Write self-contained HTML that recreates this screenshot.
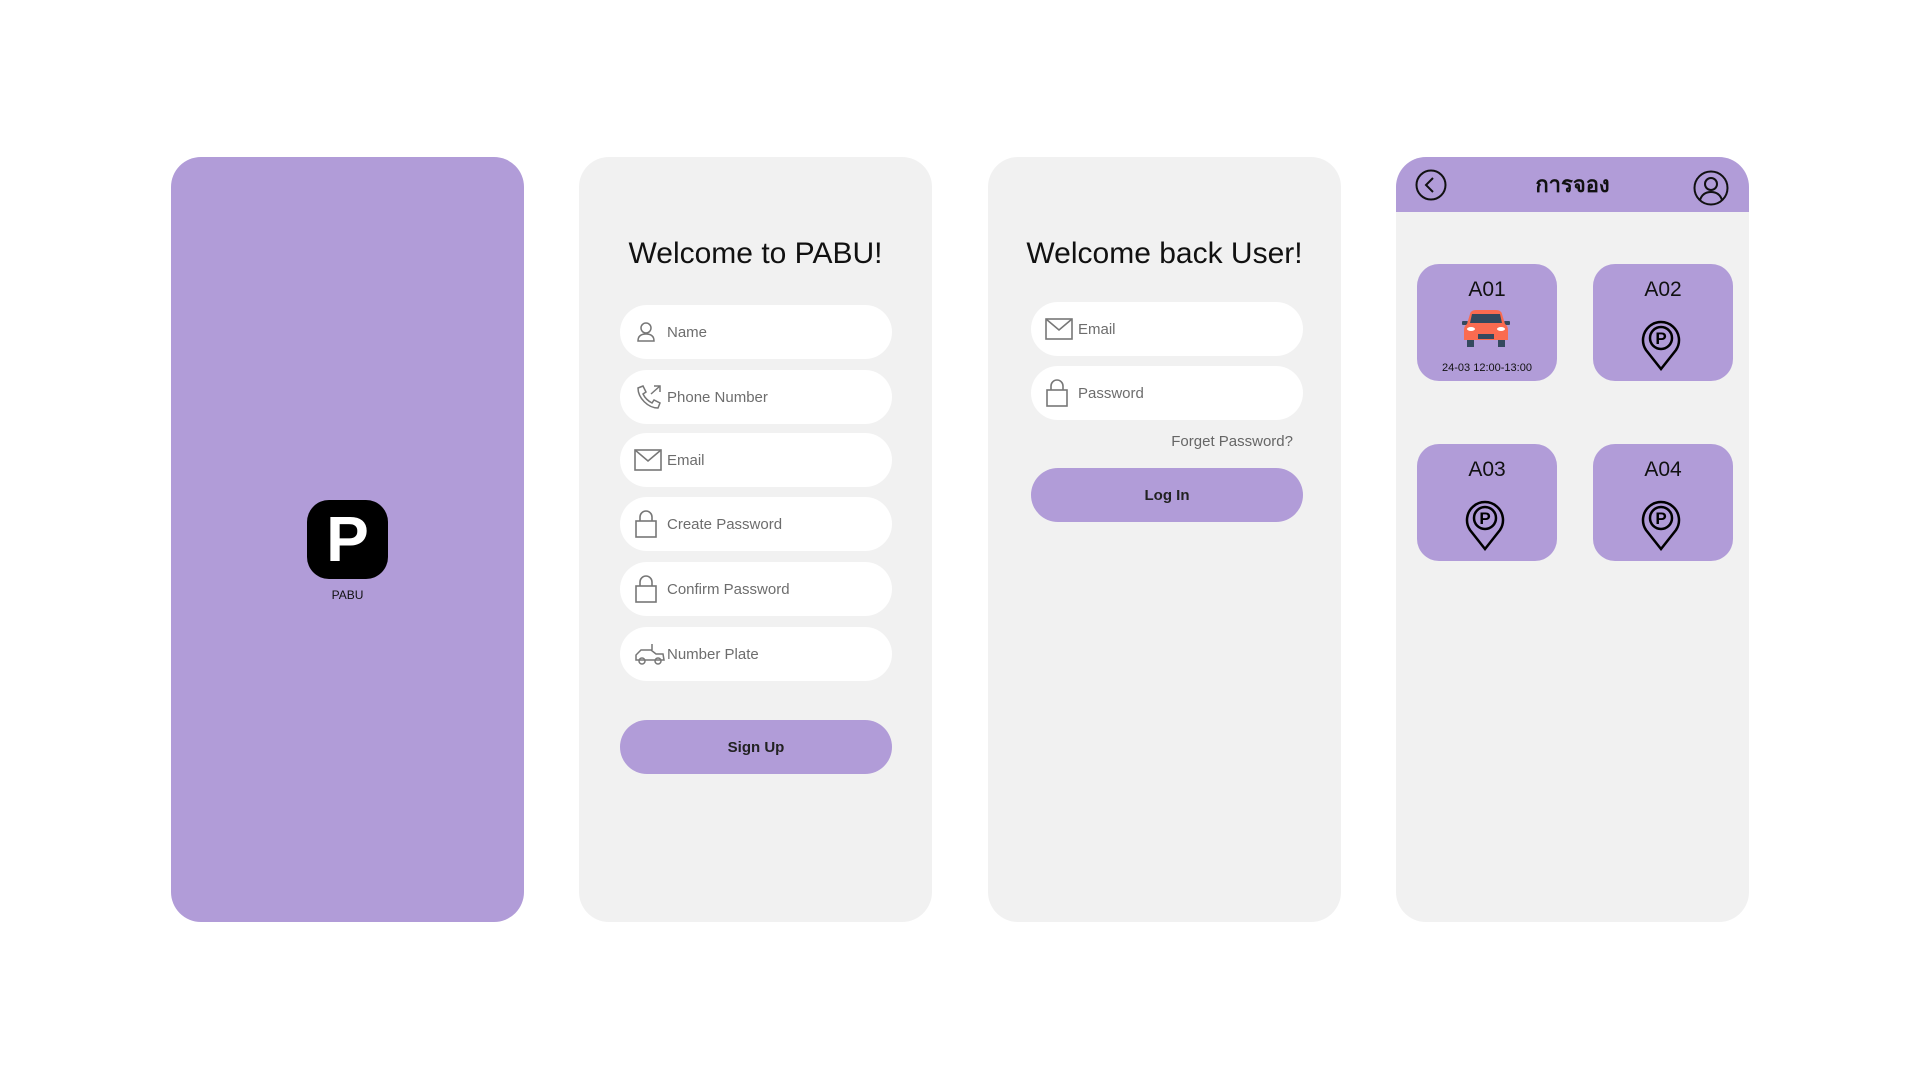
<!DOCTYPE html>
<html><head><meta charset="utf-8"><style>
*{margin:0;padding:0;box-sizing:border-box}
body{width:1920px;height:1080px;background:#fff;position:relative;font-family:"Liberation Sans","Noto Sans CJK SC",sans-serif;overflow:hidden}
.p{position:absolute;top:157px;height:765px;width:353px;border-radius:30px;background:#f1f1f1;overflow:hidden}
.pur{background:#b19cd8}
.in{position:absolute;height:54px;background:#fff;border-radius:27px;font-size:15px;color:#6d6d6d;display:flex;align-items:center}
.in svg{position:absolute;left:14px}
.in span{position:absolute;left:47px}
.btn{position:absolute;height:54px;background:#b19cd8;border-radius:27px;font-size:15px;font-weight:bold;color:#222;display:flex;align-items:center;justify-content:center}
h1{position:absolute;width:100%;text-align:center;font-size:30px;font-weight:normal;color:#111}
.card{position:absolute;width:140px;height:117px;background:#b19cd8;border-radius:22px}
.card b{position:absolute;top:14px;width:100%;text-align:center;font-size:21px;font-weight:normal;color:#111}
.pin{position:absolute;left:47px;top:55px}
</style></head><body>
<div class="p pur" style="left:171px">
 <div style="position:absolute;left:136px;top:343px;width:81px;height:79px;background:#000;border-radius:22px;color:#fff;font-size:64px;font-weight:bold;text-align:center;line-height:79px">P</div>
 <div style="position:absolute;top:431px;width:100%;text-align:center;font-size:12px;color:#111">PABU</div>
</div>
<div class="p" style="left:579px">
 <h1 style="top:80px">Welcome to PABU!</h1>
 <div class="in" style="left:41px;top:148px;width:272px"><svg width="24" height="24" viewBox="0 0 24 24" fill="none" stroke="#777" stroke-width="1.5"><circle cx="12" cy="8" r="5"/><path d="M4 21c0-5 3-7 8-7s8 2 8 7z"/></svg><span>Name</span></div>
 <div class="in" style="left:41px;top:213px;width:272px"><svg width="30" height="28" viewBox="0 0 30 28" fill="none" stroke="#777" stroke-width="1.5"><path d="M4 5l5-2 3 6-3 2c2 4 5 7 9 9l2-3 6 3-2 5c-10 0-20-10-20-20z"/><path d="M17 11l9-8M20 3h6v6"/></svg><span>Phone Number</span></div>
 <div class="in" style="left:41px;top:276px;width:272px"><svg width="28" height="22" viewBox="0 0 28 22" fill="none" stroke="#777" stroke-width="1.6"><rect x="1" y="1" width="26" height="20"/><path d="M1 1l13 11 13-11"/></svg><span>Email</span></div>
 <div class="in" style="left:41px;top:340px;width:272px"><svg width="24" height="28" viewBox="0 0 24 28" fill="none" stroke="#777" stroke-width="1.6"><rect x="2" y="11" width="20" height="16"/><path d="M6 11V7a6 6 0 0112 0v4"/></svg><span>Create Password</span></div>
 <div class="in" style="left:41px;top:405px;width:272px"><svg width="24" height="28" viewBox="0 0 24 28" fill="none" stroke="#777" stroke-width="1.6"><rect x="2" y="11" width="20" height="16"/><path d="M6 11V7a6 6 0 0112 0v4"/></svg><span>Confirm Password</span></div>
 <div class="in" style="left:41px;top:470px;width:272px"><svg width="32" height="24" viewBox="0 0 32 24" fill="none" stroke="#777" stroke-width="1.5"><path d="M2 18v-5l5-5h10l5 4h7l1 6z M18 8V2"/><circle cx="8" cy="19" r="3"/><circle cx="24" cy="19" r="3"/></svg><span>Number Plate</span></div>
 <div class="btn" style="left:41px;top:563px;width:272px">Sign Up</div>
</div>
<div class="p" style="left:988px">
 <h1 style="top:80px">Welcome back User!</h1>
 <div class="in" style="left:43px;top:145px;width:272px"><svg width="28" height="22" viewBox="0 0 28 22" fill="none" stroke="#777" stroke-width="1.6"><rect x="1" y="1" width="26" height="20"/><path d="M1 1l13 11 13-11"/></svg><span>Email</span></div>
 <div class="in" style="left:43px;top:209px;width:272px"><svg width="24" height="28" viewBox="0 0 24 28" fill="none" stroke="#777" stroke-width="1.6"><rect x="2" y="11" width="20" height="16"/><path d="M6 11V7a6 6 0 0112 0v4"/></svg><span>Password</span></div>
 <div style="position:absolute;right:48px;top:276px;font-size:15px;color:#666">Forget Password?</div>
 <div class="btn" style="left:43px;top:311px;width:272px">Log In</div>
</div>
<div class="p" style="left:1396px">
 <div style="position:absolute;left:0;top:0;width:100%;height:55px;background:#b19cd8"></div>
 <svg style="position:absolute;left:19px;top:12px" width="32" height="32" viewBox="0 0 32 32" fill="none" stroke="#111" stroke-width="2"><circle cx="16" cy="16" r="14.5"/><path d="M18 9l-7 7 7 7"/></svg>
 <div style="position:absolute;top:10px;width:100%;text-align:center;font-size:22px;font-weight:bold;color:#111;font-family:'Liberation Sans','Noto Sans CJK SC',sans-serif">การจอง</div>
 <svg style="position:absolute;left:297px;top:13px" width="36" height="36" viewBox="0 0 36 36" fill="none" stroke="#111" stroke-width="2"><circle cx="18" cy="18" r="16.5"/><circle cx="18" cy="14" r="6"/><path d="M7 30c2-6 6-8 11-8s9 2 11 8"/></svg>
 <div class="card" style="left:21px;top:107px"><b>A01</b>
  <svg style="position:absolute;left:44px;top:46px" width="50" height="38" viewBox="0 0 50 38"><rect x="1" y="11" width="6" height="4" rx="1" fill="#34495e"/><rect x="43" y="11" width="6" height="4" rx="1" fill="#34495e"/><path d="M9 4q1-4 6-4h20q5 0 6 4l3 10q3 2 3 6v10H3V20q0-4 3-6z" fill="#fa6b50"/><path d="M11 4h28l2 9H9z" fill="#34495e"/><rect x="6" y="30" width="7" height="7" fill="#34495e"/><rect x="37" y="30" width="7" height="7" fill="#34495e"/><rect x="17" y="24" width="16" height="5" fill="#34495e"/><ellipse cx="10" cy="19" rx="4" ry="2" fill="#fff"/><ellipse cx="40" cy="19" rx="4" ry="2" fill="#fff"/></svg>
  <div style="position:absolute;top:98px;width:100%;text-align:center;font-size:11px;color:#111">24-03 12:00-13:00</div></div>
 <div class="card" style="left:197px;top:107px"><b>A02</b><svg class="pin" width="42" height="52" viewBox="0 0 42 52" fill="none" stroke="#000" stroke-width="2.5"><path d="M21 50L6 31a18 18 0 1130 0z"/><circle cx="21" cy="19" r="11"/><text x="21" y="25" text-anchor="middle" font-size="17" font-weight="bold" fill="#000" stroke="none" font-family="Liberation Sans">P</text></svg></div>
 <div class="card" style="left:21px;top:287px"><b>A03</b><svg class="pin" width="42" height="52" viewBox="0 0 42 52" fill="none" stroke="#000" stroke-width="2.5"><path d="M21 50L6 31a18 18 0 1130 0z"/><circle cx="21" cy="19" r="11"/><text x="21" y="25" text-anchor="middle" font-size="17" font-weight="bold" fill="#000" stroke="none" font-family="Liberation Sans">P</text></svg></div>
 <div class="card" style="left:197px;top:287px"><b>A04</b><svg class="pin" width="42" height="52" viewBox="0 0 42 52" fill="none" stroke="#000" stroke-width="2.5"><path d="M21 50L6 31a18 18 0 1130 0z"/><circle cx="21" cy="19" r="11"/><text x="21" y="25" text-anchor="middle" font-size="17" font-weight="bold" fill="#000" stroke="none" font-family="Liberation Sans">P</text></svg></div>
</div>
</body></html>
